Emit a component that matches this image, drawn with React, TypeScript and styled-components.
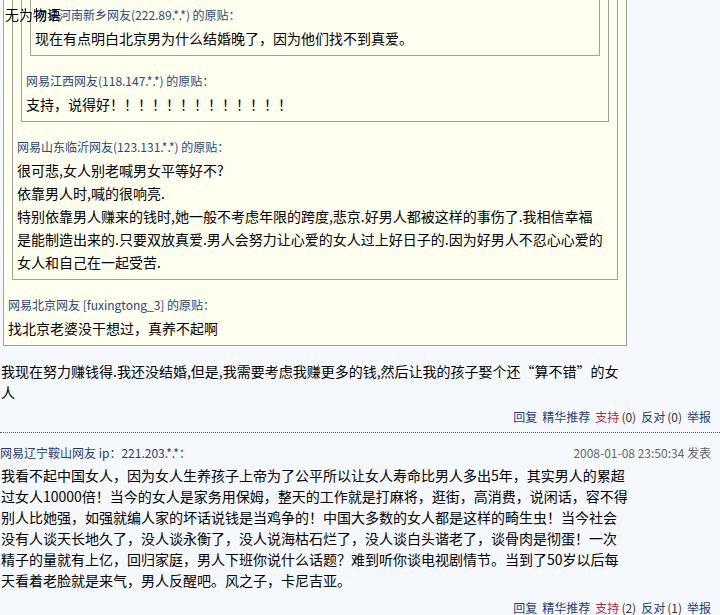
import React from 'react'
import styled, { createGlobalStyle } from 'styled-components'

const GlobalStyle = createGlobalStyle`
  html, body {
    margin: 0;
    padding: 0;
    background: #f5f9fd;
  }
  body {
    font-family: "Noto Sans CJK SC", "Liberation Sans", sans-serif;
    color: #000;
    overflow: hidden;
  }
`

const Page = styled.div`
  position: relative;
  width: 720px;
  margin-top: -42px;
`

const SiteTag = styled.div`
  position: fixed;
  top: 5px;
  left: 5px;
  font-size: 14px;
  line-height: 18px;
  color: #000;
`

const Quote = styled.div<{ $outer?: boolean }>`
  box-sizing: border-box;
  border: 1px solid #a2a298;
  background: #fffff0;
  padding: 8px 4px 5px 4px;
  margin: ${(p) => (p.$outer ? '0 0 0 3px' : '4px 4px 0 4px')};
  width: ${(p) => (p.$outer ? '624px' : 'auto')};
`

const QuoteHead = styled.div<{ $afterNested?: boolean }>`
  font-size: 12px;
  line-height: 18px;
  color: #2a477c;
  white-space: nowrap;
  margin-top: ${(p) => (p.$afterNested ? '16px' : '0')};
`

const QuoteText = styled.div`
  font-size: 14px;
  line-height: 23px;
  margin-top: 3px;
  white-space: nowrap;
`

const PostText = styled.div<{ $gap: number }>`
  font-size: 14px;
  line-height: 21px;
  margin-top: ${(p) => p.$gap}px;
  padding-left: 1px;
  white-space: nowrap;
`

const Actions = styled.div<{ $gap: number }>`
  display: flex;
  justify-content: flex-end;
  align-items: baseline;
  gap: 5px;
  font-size: 12px;
  line-height: 18px;
  margin-top: ${(p) => p.$gap}px;
  padding: 0 9px 6px 0;
`

const Divider = styled.div`
  border-top: 1px dotted #555;
`

const ActionLink = styled.span<{ $hot?: boolean }>`
  color: ${(p) => (p.$hot ? '#b3283c' : '#1f3c78')};
`

const Count = styled.span`
  color: #333;
  margin-left: 2px;
`

const PostHead = styled.div`
  display: flex;
  justify-content: space-between;
  font-size: 12px;
  line-height: 18px;
  padding: 11px 9px 0 0;
`

const Author = styled.span`
  color: #1f3c78;
`

const PostDate = styled.span`
  color: #666;
`

function ActionBar({ up, down, gap }: { up: number; down: number; gap: number }) {
  return (
    <Actions $gap={gap}>
      <ActionLink>回复</ActionLink>
      <ActionLink>精华推荐</ActionLink>
      <span>
        <ActionLink $hot>支持</ActionLink>
        <Count>({up})</Count>
      </span>
      <span>
        <ActionLink>反对</ActionLink>
        <Count>({down})</Count>
      </span>
      <ActionLink>举报</ActionLink>
    </Actions>
  )
}

export default function App() {
  return (
    <>
      <GlobalStyle />
      <Page>
        <SiteTag>无为物语</SiteTag>
        <Quote $outer>
          <Quote>
            <Quote>
              <Quote>
                <QuoteHead>网易河南新乡网友(222.89.*.*) 的原贴：</QuoteHead>
                <QuoteText>现在有点明白北京男为什么结婚晚了，因为他们找不到真爱。</QuoteText>
              </Quote>
              <QuoteHead $afterNested>网易江西网友(118.147.*.*) 的原贴：</QuoteHead>
              <QuoteText>支持，说得好！！！！！！！！！！！！！</QuoteText>
            </Quote>
            <QuoteHead $afterNested>网易山东临沂网友(123.131.*.*) 的原贴：</QuoteHead>
            <QuoteText>
              很可悲,女人别老喊男女平等好不?
              <br />
              依靠男人时,喊的很响亮.
              <br />
              特别依靠男人赚来的钱时,她一般不考虑年限的跨度,悲京.好男人都被这样的事伤了.我相信幸福
              <br />
              是能制造出来的.只要双放真爱.男人会努力让心爱的女人过上好日子的.因为好男人不忍心心爱的
              <br />
              女人和自己在一起受苦.
            </QuoteText>
          </Quote>
          <QuoteHead $afterNested>网易北京网友 [fuxingtong_3] 的原贴：</QuoteHead>
          <QuoteText>找北京老婆没干想过，真养不起啊</QuoteText>
        </Quote>

        <PostText $gap={15}>
          我现在努力赚钱得.我还没结婚,但是,我需要考虑我赚更多的钱,然后让我的孩子娶个还“算不错”的女
          <br />
          人
        </PostText>
        <ActionBar up={0} down={0} gap={5} />
        <Divider />

        <PostHead>
          <Author>网易辽宁鞍山网友 ip：221.203.*.*：</Author>
          <PostDate>2008-01-08 23:50:34 发表</PostDate>
        </PostHead>
        <PostText $gap={3}>
          我看不起中国女人，因为女人生养孩子上帝为了公平所以让女人寿命比男人多出5年，其实男人的累超
          <br />
          过女人10000倍！当今的女人是家务用保姆，整天的工作就是打麻将，逛街，高消费，说闲话，容不得
          <br />
          别人比她强，如强就编人家的坏话说钱是当鸡争的！中国大多数的女人都是这样的畸生虫！当今社会
          <br />
          没有人谈天长地久了，没人谈永衡了，没人说海枯石烂了，没人谈白头谐老了，谈骨肉是彻蛋！一次
          <br />
          精子的量就有上亿，回归家庭，男人下班你说什么话题？难到听你谈电视剧情节。当到了50岁以后每
          <br />
          天看着老脸就是来气，男人反醒吧。风之子，卡尼吉亚。
        </PostText>
        <ActionBar up={2} down={1} gap={8} />
      </Page>
    </>
  )
}
